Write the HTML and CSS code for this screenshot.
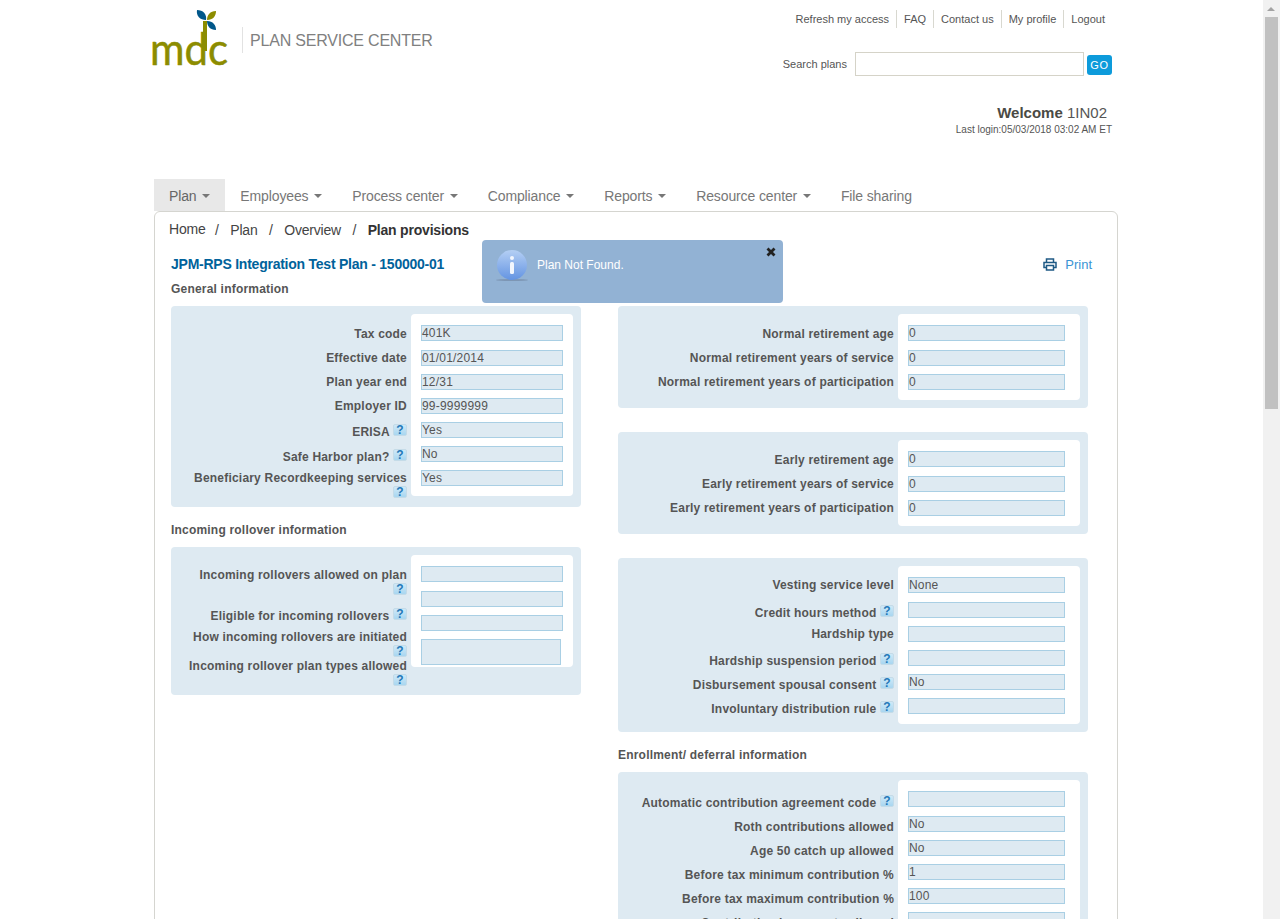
FILE: index.html
```html
<!DOCTYPE html>
<html lang="en">
<head>
    <meta charset="UTF-8">
    <title>Plan provisions</title>
    <link rel="stylesheet" href="styles.css">
</head>
<body>
<div class="window">
    <div class="viewport">
        <div class="container">
            <header class="site-header">
                <div class="brand">
                    <svg class="logo" width="84" height="72" viewBox="-4 0 84 72">
                        <text x="-2" y="55" class="logo-text" textLength="78" lengthAdjust="spacingAndGlyphs">mdc</text>
                        <rect x="51" y="11" width="4" height="30" fill="#8c8c00"/>
                        <path d="M54 10 C48 10 44 6 45 0 C51 0 55 4 54 10Z" fill="#00578a"/>
                        <path d="M55 10 C55 5 58 1 64 1 C64 6 61 10 55 10Z" fill="#8c8c00"/>
                        <path d="M55 11 C61 11 64 15 64 20 C58 20 55 16 55 11Z" fill="#00578a"/>
                    </svg>
                    <div class="brand-name">PLAN SERVICE CENTER</div>
                </div>
                <div class="header-right">
                    <ul class="top-links">
                        <li>Refresh my access</li>
                        <li>FAQ</li>
                        <li>Contact us</li>
                        <li>My profile</li>
                        <li>Logout</li>
                    </ul>
                    <div class="search">
                        <span class="search-label">Search plans</span>
                        <input class="search-input" type="text">
                        <button class="go-btn">GO</button>
                    </div>
                    <div class="welcome"><b>Welcome</b> 1IN02</div>
                    <div class="last-login">Last login:05/03/2018 03:02 AM ET</div>
                </div>
            </header>

            <nav class="tabs">
                <a class="tab active">Plan <i class="caret"></i></a>
                <a class="tab">Employees <i class="caret"></i></a>
                <a class="tab">Process center <i class="caret"></i></a>
                <a class="tab">Compliance <i class="caret"></i></a>
                <a class="tab">Reports <i class="caret"></i></a>
                <a class="tab">Resource center <i class="caret"></i></a>
                <a class="tab">File sharing</a>
            </nav>

            <main class="content">
                <div class="alert">
                    <svg class="alert-icon" width="32" height="32" viewBox="0 0 32 32">
                        <defs>
                            <linearGradient id="infoFill" x1="0" y1="0" x2="0" y2="1">
                                <stop offset="0" stop-color="#b4cff4"/>
                                <stop offset="1" stop-color="#6494e2"/>
                            </linearGradient>
                        </defs>
                        <ellipse cx="16" cy="30" rx="16" ry="1" fill="#7d96b4"/>
                        <circle cx="16" cy="15" r="15" fill="url(#infoFill)"/>
                        <circle cx="16" cy="8" r="2" fill="#f2f6fd"/>
                        <rect x="14" y="12" width="4" height="12" rx="1.500" fill="#f2f6fd"/>
                    </svg>
                    <span class="alert-text">Plan Not Found.</span>
                    <svg class="alert-close" width="10" height="10" viewBox="0 0 10 10">
                        <path d="M1.500 1.500L8.500 8.500M8.500 1.500L1.500 8.500" stroke="#222" stroke-width="2.800"/>
                    </svg>
                </div>

                <div class="breadcrumb">
                    <span class="crumb-home">Home</span><span class="sep">/</span><span>Plan</span><span class="sep">/</span><span>Overview</span><span class="sep">/</span><b>Plan provisions</b>
                </div>

                <div class="title-row">
                    <h1 class="plan-title">JPM-RPS Integration Test Plan - 150000-01</h1>
                    <a class="print">
                        <svg width="14" height="13" viewBox="0 0 14 13">
                            <path d="M3.500 4V1h7v3M3.500 9.500H1V4.500h12v5h-2.500M3.500 7.500h7v4.500h-7z" fill="none" stroke="#1f5a85" stroke-width="1.500"/>
                        </svg>
                        Print
                    </a>
                </div>

                <div class="columns">
                    <div class="col-left">
                        <h2 class="section-title first">General information</h2>
                        <section class="panel">
                            <div class="labels">
                                <div class="lbl">Tax code</div>
                                <div class="lbl">Effective date</div>
                                <div class="lbl">Plan year end</div>
                                <div class="lbl h26">Employer ID</div>
                                <div class="lbl h25">ERISA <i class="help">?</i></div>
                                <div class="lbl h21">Safe Harbor plan? <i class="help">?</i></div>
                                <div class="lbl h36">Beneficiary Recordkeeping services <i class="help">?</i></div>
                            </div>
                            <div class="values">
                                <div class="field gap9">401K</div>
                                <div class="field">01/01/2014</div>
                                <div class="field">12/31</div>
                                <div class="field">99-9999999</div>
                                <div class="field">Yes</div>
                                <div class="field">No</div>
                                <div class="field">Yes</div>
                            </div>
                        </section>

                        <h2 class="section-title">Incoming rollover information</h2>
                        <section class="panel">
                            <div class="labels">
                                <div class="lbl h41">Incoming rollovers allowed on plan <i class="help">?</i></div>
                                <div class="lbl h21">Eligible for incoming rollovers <i class="help">?</i></div>
                                <div class="lbl h29">How incoming rollovers are initiated <i class="help">?</i></div>
                                <div class="lbl h36">Incoming rollover plan types allowed <i class="help">?</i></div>
                            </div>
                            <div class="values">
                                <div class="field gap9"></div>
                                <div class="field"></div>
                                <div class="field"></div>
                                <div class="field field-area"></div>
                            </div>
                        </section>
                    </div>

                    <div class="col-right">
                        <section class="panel panel-wide first">
                            <div class="labels">
                                <div class="lbl">Normal retirement age</div>
                                <div class="lbl">Normal retirement years of service</div>
                                <div class="lbl">Normal retirement years of participation</div>
                            </div>
                            <div class="values">
                                <div class="field gap9">0</div>
                                <div class="field">0</div>
                                <div class="field">0</div>
                            </div>
                        </section>

                        <section class="panel panel-wide spaced">
                            <div class="labels">
                                <div class="lbl">Early retirement age</div>
                                <div class="lbl">Early retirement years of service</div>
                                <div class="lbl">Early retirement years of participation</div>
                            </div>
                            <div class="values">
                                <div class="field gap9">0</div>
                                <div class="field">0</div>
                                <div class="field">0</div>
                            </div>
                        </section>

                        <section class="panel panel-wide spaced">
                            <div class="labels labels-vesting">
                                <div class="lbl h28">Vesting service level</div>
                                <div class="lbl h21">Credit hours method <i class="help">?</i></div>
                                <div class="lbl h27">Hardship type</div>
                                <div class="lbl">Hardship suspension period <i class="help">?</i></div>
                                <div class="lbl">Disbursement spousal consent <i class="help">?</i></div>
                                <div class="lbl">Involuntary distribution rule <i class="help">?</i></div>
                            </div>
                            <div class="values">
                                <div class="field gap9">None</div>
                                <div class="field"></div>
                                <div class="field"></div>
                                <div class="field"></div>
                                <div class="field">No</div>
                                <div class="field"></div>
                            </div>
                        </section>

                        <h2 class="section-title">Enrollment/ deferral information</h2>
                        <section class="panel panel-wide">
                            <div class="labels labels-enroll">
                                <div class="lbl">Automatic contribution agreement code <i class="help">?</i></div>
                                <div class="lbl">Roth contributions allowed</div>
                                <div class="lbl">Age 50 catch up allowed</div>
                                <div class="lbl">Before tax minimum contribution %</div>
                                <div class="lbl">Before tax maximum contribution %</div>
                                <div class="lbl">Contribution increments allowed</div>
                            </div>
                            <div class="values">
                                <div class="field gap9"></div>
                                <div class="field">No</div>
                                <div class="field">No</div>
                                <div class="field">1</div>
                                <div class="field">100</div>
                                <div class="field"></div>
                            </div>
                        </section>
                    </div>
                </div>
            </main>
        </div>
    </div>
    <div class="scrollbar">
        <div class="scrollbar-arrow"></div>
        <div class="scrollbar-thumb"></div>
    </div>
</div>
</body>
</html>
```

FILE: styles.css
```css
html, body {
    margin: 0;
    padding: 0;
    overflow: hidden;
}

body {
    font-family: 'Liberation Sans', Arial, sans-serif;
    font-size: 12px;
    color: #555;
    background-color: #fff;
}

.window {
    display: flex;
    height: 919px;
}

.viewport {
    flex: 1;
    overflow: hidden;
}

.container {
    width: 964px;
    margin-left: 154px;
}

/* Scrollbar */
.scrollbar {
    width: 17px;
    background-color: #f1f1f1;
}

.scrollbar-arrow {
    width: 0;
    margin: 7px 0 6px 4px;
    border-bottom: 4px solid #a3a3a3;
    border-left: 4px solid transparent;
    border-right: 4px solid transparent;
}

.scrollbar-thumb {
    width: 13px;
    height: 392px;
    margin-left: 2px;
    background-color: #c1c1c1;
}

/* Header */
.site-header {
    display: flex;
    justify-content: space-between;
    height: 179px;
}

.brand {
    display: flex;
    align-items: flex-start;
    margin-left: -6px;
    padding-top: 10px;
}

.logo-text {
    font-family: 'Lato', sans-serif;
    font-size: 45px;
    font-weight: 400;
    fill: #8c8c00;
    stroke: #8c8c00;
    stroke-width: 0.5px;
}

.brand-name {
    margin: 17px 0 0 10px;
    padding-left: 7px;
    height: 26px;
    line-height: 28px;
    border-left: 1px solid #e2e2e2;
    font-size: 16px;
    letter-spacing: -0.2px;
    color: #808080;
}

.header-right {
    width: 400px;
    padding-right: 6px;
    text-align: right;
}

.top-links {
    display: flex;
    justify-content: flex-end;
    list-style: none;
    margin: 10px 0 0;
    padding: 0 7px 0 0;
    font-size: 11px;
    white-space: nowrap;
}

.top-links li {
    height: 18px;
    line-height: 18px;
    padding: 0 7px;
    border-left: 1px solid #d8d8d0;
}

.top-links li:first-child {
    border-left: none;
}

.top-links li:last-child {
    padding-right: 0;
}

.search {
    display: flex;
    justify-content: flex-end;
    align-items: center;
    margin-top: 24px;
    height: 24px;
}

.search-label {
    font-size: 11px;
    margin-right: 8px;
    white-space: nowrap;
}

.search-input {
    width: 229px;
    height: 24px;
    box-sizing: border-box;
    border: 1px solid #d5d3c8;
    background-color: #fff;
    padding: 0;
    margin-right: 3px;
}

.go-btn {
    width: 25px;
    height: 20px;
    padding: 0;
    border: none;
    border-radius: 3px;
    background-color: #0d9bdb;
    color: #fff;
    font-family: inherit;
    font-size: 11px;
    letter-spacing: 0.8px;
    margin-top: 2px;
}

.welcome {
    margin-top: 28px;
    padding-right: 5px;
    font-size: 15px;
    line-height: 18px;
}

.welcome b {
    color: #4a4a44;
}

.last-login {
    font-size: 10px;
    line-height: 14px;
    margin-top: 1px;
}

/* Tabs */
.tabs {
    display: flex;
    height: 32px;
}

.tab {
    padding: 0 15px;
    line-height: 35px;
    font-size: 14px;
    letter-spacing: -0.12px;
    color: #777;
}

.tab.active {
    background-color: #e8e8e8;
    color: #666;
}

.caret {
    display: inline-block;
    margin-left: 2px;
    vertical-align: 3px;
    border-top: 4px solid #777;
    border-left: 4px solid transparent;
    border-right: 4px solid transparent;
}

/* Content */
.content {
    position: relative;
    box-sizing: border-box;
    height: 800px;
    border: 1px solid #d5d5d0;
    border-radius: 6px 6px 0 0;
    padding: 0 0 0 16px;
}

.alert {
    position: absolute;
    left: 327px;
    top: 28px;
    width: 301px;
    height: 63px;
    border-radius: 4px;
    background-color: #92b2d4;
}

.alert-icon {
    position: absolute;
    left: 14px;
    top: 10px;
}

.alert-text {
    position: absolute;
    left: 55px;
    top: 18px;
    line-height: 14px;
    color: #fff;
}

.alert-close {
    position: absolute;
    right: 7px;
    top: 7px;
}

.breadcrumb {
    display: flex;
    align-items: center;
    height: 36px;
    margin-left: -2px;
    font-size: 14px;
    letter-spacing: -0.2px;
    color: #444;
}

.crumb-home {
    position: relative;
    top: -1px;
    margin-right: -2px;
}

.sep {
    margin: 0 11.5px;
}

.breadcrumb b {
    color: #333;
}

.title-row {
    display: flex;
    justify-content: space-between;
    align-items: center;
    height: 24px;
    margin-top: 4px;
}

.plan-title {
    margin: 0;
    font-size: 14px;
    letter-spacing: -0.24px;
    color: #00629b;
}

.print {
    display: flex;
    align-items: center;
    gap: 8px;
    margin-right: 25px;
    font-size: 13px;
    color: #3a94d4;
}

.columns {
    display: flex;
}

.col-left {
    width: 410px;
}

.col-right {
    width: 470px;
    margin-left: 37px;
}

.section-title {
    margin: 14px 0 8px;
    font-size: 12px;
    line-height: 18px;
    letter-spacing: 0.2px;
    color: #555;
}

.section-title.first {
    margin: 4px 0 8px;
}

/* Form panels */
.panel {
    display: flex;
    align-items: flex-start;
    box-sizing: border-box;
    padding: 8px 8px 2px 16px;
    border-radius: 4px;
    background-color: #deeaf2;
}

.panel-wide {
    padding-left: 0;
}

.panel.first {
    margin-top: 30px;
}

.panel.spaced {
    margin-top: 24px;
}

.labels {
    width: 220px;
    padding-top: 11px;
    margin-right: 4px;
}

.panel-wide .labels {
    width: 276px;
}

.panel-wide .labels-vesting {
    padding-top: 10px;
}

.panel-wide .labels-enroll {
    padding-top: 14px;
}

.lbl {
    box-sizing: border-box;
    height: 24px;
    padding-top: 1px;
    line-height: 16px;
    text-align: right;
    font-weight: bold;
    letter-spacing: 0.2px;
    color: #555;
}

.h21 { height: 21px; }
.h25 { height: 25px; }
.h26 { height: 26px; }
.h27 { height: 27px; }
.h28 { height: 28px; }
.h29 { height: 29px; }
.h36 { height: 36px; }
.h41 { height: 41px; }

.help {
    display: inline-block;
    box-sizing: border-box;
    width: 14px;
    height: 12px;
    line-height: 10px;
    border: 1px solid #c4dbe8;
    border-radius: 2px;
    background: linear-gradient(#cfe9f8, #a8d6f0);
    color: #2478b8;
    font-style: normal;
    font-size: 12px;
    font-weight: bold;
    letter-spacing: 0;
    text-align: center;
    vertical-align: top;
}

.values {
    width: 162px;
    box-sizing: border-box;
    margin-bottom: 6px;
    padding: 11px 10px 2px;
    border-radius: 4px;
    background-color: #fff;
}

.panel-wide .values {
    width: 182px;
    padding-right: 15px;
}

.field {
    box-sizing: border-box;
    height: 16px;
    margin-bottom: 8px;
    line-height: 14px;
    letter-spacing: 0.2px;
    border: 1px solid #a9cfe4;
    background-color: #deeaf2;
    color: #555;
}

.field.gap9 {
    margin-bottom: 9px;
}

.field-area {
    width: 140px;
    height: 26px;
    margin-bottom: 0;
}
```
